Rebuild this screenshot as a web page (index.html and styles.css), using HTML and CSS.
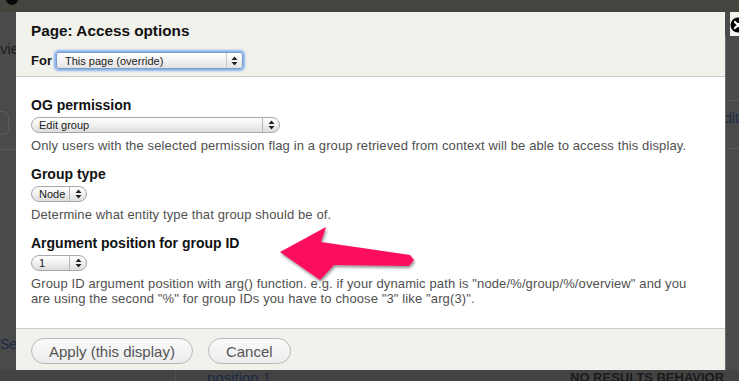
FILE: index.html
```html
<!DOCTYPE html>
<html>
<head>
    <title>Page: Access options</title>
    <link rel="stylesheet" href="styles.css">
</head>
<body>
    <!-- dimmed views page behind the modal -->
    <div class="page">
        <div class="topbar"><span class="topbar-close"></span></div>
        <div class="page-main">
            <div class="side-left">
                <span class="side-text">vie</span>
                <span class="side-box"></span>
                <span class="side-line"></span>
                <span class="side-link">Se</span>
            </div>
            <div class="page-center"></div>
            <div class="side-right">
                <span class="side-line"></span>
                <span class="side-link">dit</span>
                <span class="side-line"></span>
            </div>
        </div>
        <div class="page-foot">
            <span class="foot-col"></span>
            <span class="foot-link">position 1</span>
            <span class="foot-head">NO RESULTS BEHAVIOR</span>
        </div>
    </div>

    <div class="dialog">
        <div class="dialog-header">
            <h1>Page: Access options</h1>
            <div class="for-row">
                <label>For</label>
                <div class="select select-focus">
                    <span class="select-value">This page (override)</span>
                    <span class="select-arrows">
                        <svg width="7" height="10" viewBox="0 0 7 10"><path d="M3.5 0.5L6.5 4H0.5Z M3.5 9.5L6.5 6H0.5Z" fill="#222"/></svg>
                    </span>
                </div>
            </div>
        </div>

        <div class="dialog-body">
            <div class="form-item">
                <h2>OG permission</h2>
                <div class="select select-wide">
                    <span class="select-value">Edit group</span>
                    <span class="select-arrows">
                        <svg width="7" height="10" viewBox="0 0 7 10"><path d="M3.5 0.5L6.5 4H0.5Z M3.5 9.5L6.5 6H0.5Z" fill="#222"/></svg>
                    </span>
                </div>
                <div class="description">Only users with the selected permission flag in a group retrieved from context will be able to access this display.</div>
            </div>
            <div class="form-item">
                <h2>Group type</h2>
                <div class="select select-small">
                    <span class="select-value">Node</span>
                    <span class="select-arrows">
                        <svg width="7" height="10" viewBox="0 0 7 10"><path d="M3.5 0.5L6.5 4H0.5Z M3.5 9.5L6.5 6H0.5Z" fill="#222"/></svg>
                    </span>
                </div>
                <div class="description">Determine what entity type that group should be of.</div>
            </div>
            <div class="form-item">
                <h2>Argument position for group ID</h2>
                <div class="select select-small">
                    <span class="select-value">1</span>
                    <span class="select-arrows">
                        <svg width="7" height="10" viewBox="0 0 7 10"><path d="M3.5 0.5L6.5 4H0.5Z M3.5 9.5L6.5 6H0.5Z" fill="#222"/></svg>
                    </span>
                </div>
                <div class="description">Group ID argument position with arg() function. e.g. if your dynamic path is "node/%/group/%/overview" and you are using the second "%" for group IDs you have to choose "3" like "arg(3)".</div>
            </div>
        </div>

        <div class="dialog-footer">
            <button class="btn btn-apply">Apply (this display)</button>
            <button class="btn">Cancel</button>
        </div>
    </div>

    <span class="dialog-close">
        <svg width="16" height="16" viewBox="0 0 16 16">
            <circle cx="8" cy="8" r="7.5" fill="#000"/>
            <path d="M5 5L11 11M11 5L5 11" stroke="#fff" stroke-width="2.2" stroke-linecap="round"/>
        </svg>
    </span>

    <!-- annotation arrow -->
    <svg class="annotation" width="739" height="381" viewBox="0 0 739 381">
        <defs>
            <filter id="shadow" x="-20%" y="-40%" width="140%" height="180%">
                <feDropShadow dx="1" dy="2" stdDeviation="1.5" flood-color="#000" flood-opacity="0.45"/>
            </filter>
        </defs>
        <polygon points="280,252 326,227 321,242 410,255 414,260 409,266 334,265 320,280" fill="#fb0a60" filter="url(#shadow)"/>
    </svg>
</body>
</html>
```

FILE: styles.css
```css
body {
    margin: 0;
    width: 739px;
    height: 381px;
    overflow: hidden;
    position: relative;
    background-color: #4a4a4a;
    font-family: 'Liberation Sans', Arial, sans-serif;
}

/* background page */
.page {
    display: flex;
    flex-direction: column;
    height: 381px;
}

.topbar {
    height: 12px;
    background-color: #45443f;
    position: relative;
    overflow: hidden;
}

.topbar-close {
    display: block;
    width: 12px;
    height: 12px;
    margin: -7px 0 0 6px;
    border-radius: 50%;
    background-color: #0a0a0a;
}

.page-main {
    flex: 1;
    display: flex;
}

.side-left {
    width: 16px;
    display: flex;
    flex-direction: column;
    overflow: hidden;
}

.side-text {
    margin-top: 28px;
    font-size: 15px;
    color: #1e1e1e;
    white-space: nowrap;
}

.side-box {
    display: block;
    width: 8px;
    height: 22px;
    margin-top: 54px;
    border: 1px solid #5c5c5c;
    border-left: none;
    border-radius: 0 6px 6px 0;
}

.side-line {
    display: block;
    height: 1px;
    margin-top: 14px;
    background-color: #5a5a5a;
}

.side-link {
    margin-top: 186px;
    font-size: 14px;
    color: #1d2b45;
    white-space: nowrap;
}

.page-center {
    flex: 1;
}

.side-right {
    width: 13px;
    margin-top: 24px;
    border-left: 1px solid #6a6a6a;
    display: flex;
    flex-direction: column;
    overflow: hidden;
}

.side-right .side-line {
    margin-top: 64px;
}

.side-right .side-link {
    margin-top: 9px;
    margin-left: -2px;
    font-size: 14px;
}

.side-right .side-line + .side-link + .side-line {
    margin-top: 22px;
}

.page-foot {
    height: 11px;
    display: flex;
    background-color: #434343;
    overflow: hidden;
}

.foot-col {
    width: 175px;
    border-right: 1px solid #505050;
}

.foot-link {
    margin-left: 31px;
    font-size: 15px;
    line-height: 15px;
    color: #1c2a44;
    width: 363px;
}

.foot-head {
    font-size: 13px;
    font-weight: bold;
    line-height: 14px;
    color: #1a1a1a;
    padding-top: 1px;
}

/* modal dialog */
.dialog {
    position: absolute;
    left: 16px;
    top: 12px;
    width: 709px;
    height: 358px;
    display: flex;
    flex-direction: column;
    background-color: #ffffff;
}

.dialog-header {
    height: 65px;
    box-sizing: border-box;
    padding: 9px 15px 0;
    background-color: #f2f2ed;
    border-bottom: 1px solid #cccccc;
}

h1 {
    margin: 0;
    font-size: 15.3px;
    line-height: 20px;
    font-weight: bold;
    color: #111;
}

.for-row {
    display: flex;
    align-items: center;
    margin-top: 11px;
}

.for-row label {
    font-size: 13px;
    font-weight: bold;
    color: #111;
    margin-right: 4px;
}

.dialog-body {
    flex: 1;
    padding: 19px 25px 0 15px;
}

.form-item {
    margin-bottom: 12px;
}

h2 {
    margin: 0 0 3px;
    font-size: 14px;
    line-height: 18px;
    font-weight: bold;
    color: #111;
}

.description {
    margin-top: 5px;
    font-size: 13px;
    letter-spacing: 0.12px;
    line-height: 15px;
    color: #505050;
}

.select {
    display: flex;
    align-items: center;
    box-sizing: border-box;
    height: 16px;
    border: 1px solid #a9a9a9;
    border-radius: 8px;
    background: linear-gradient(#ffffff, #f1f1f1 50%, #dcdcdc);
    font-size: 11px;
    color: #222;
}

.select-value {
    flex: 1;
    padding-left: 7px;
    white-space: nowrap;
}

.select-arrows {
    display: flex;
    align-items: center;
    justify-content: center;
    width: 16px;
    height: 100%;
    border-left: 1px solid #b5b5b5;
}

.select-wide {
    width: 249px;
}

.select-small {
    width: 56px;
}

.select-focus {
    width: 187px;
    height: 17px;
    border-radius: 3px;
    border-color: #7a9cc9;
    box-shadow: 0 0 2px 2px #86b2ec;
    background: linear-gradient(#ffffff, #f3f3f3 50%, #e2e2e2);
}

.select-focus .select-value {
    padding-left: 8px;
}

.select-focus .select-arrows {
    width: 15px;
    border-left: 1px solid #c8c8c8;
}

.dialog-footer {
    height: 42px;
    box-sizing: border-box;
    padding: 9px 15px 0;
    display: flex;
    align-items: flex-start;
    gap: 15px;
    background-color: #f2f2ed;
    border-top: 1px solid #cccccc;
}

.btn {
    height: 26px;
    padding: 0 17px;
    border: 1px solid #b9b9b9;
    border-radius: 13px;
    background: linear-gradient(#fbfbfb, #ececec);
    font-family: 'Liberation Sans', Arial, sans-serif;
    font-size: 15px;
    color: #555;
}

.dialog-close {
    position: absolute;
    left: 730px;
    top: 12px;
    width: 9px;
    height: 24px;
    padding-top: 5px;
    box-sizing: border-box;
    background-color: #f2f2ed;
    overflow: hidden;
}

.dialog-close svg {
    display: block;
}

.annotation {
    position: absolute;
    left: 0;
    top: 0;
    pointer-events: none;
}
```
